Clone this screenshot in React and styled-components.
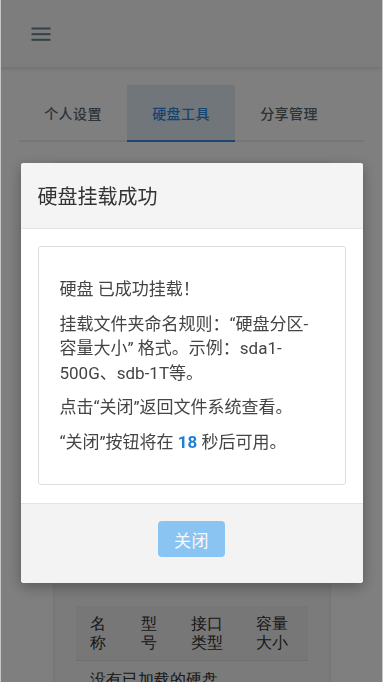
import React from "react";
import styled, { createGlobalStyle } from "styled-components";

const Global = createGlobalStyle`
  html, body { margin: 0; padding: 0; background: #ffffff; }
  body {
    font-family: Roboto, "Noto Sans CJK SC", sans-serif;
    color: #333;
  }
  * { box-sizing: border-box; }
`;

const Page = styled.div`
  height: 682px;
  overflow: hidden;
  background: #ffffff;
  border-left: 1px solid #c6c6c6;
  border-right: 1px solid #c6c6c6;
`;

const Header = styled.header`
  height: 67px;
  background: #fafafa;
  box-shadow: 0 2px 4px rgba(0, 0, 0, 0.12);
  display: flex;
  align-items: center;
  padding-left: 30px;
`;

const MenuButton = styled.button`
  border: 0;
  background: transparent;
  padding: 0;
  display: flex;
  width: 20px;
  height: 14px;
  color: #66808c;
`;

const Tabs = styled.nav`
  margin: 18px 18px 0;
  display: flex;
  border-bottom: 2px solid #ececec;
`;

const Tab = styled.div`
  width: 108px;
  height: 57px;
  margin-bottom: -2px;
  display: flex;
  align-items: center;
  justify-content: center;
  font-size: 14px;
  font-weight: 500;
  letter-spacing: 0.4px;
  color: ${(p) => (p.$active ? "#2a88e0" : "#5e666e")};
  background: ${(p) => (p.$active ? "#e2ecf6" : "transparent")};
  border-bottom: 2px solid ${(p) => (p.$active ? "#3a8ee0" : "transparent")};
`;

const Card = styled.section`
  width: 274px;
  margin: 20px auto 0;
  background: #f6f6f6;
  box-shadow: 0 1px 4px rgba(0, 0, 0, 0.18);
  padding: 444px 21px 0;
`;

const Table = styled.table`
  width: 232px;
  table-layout: fixed;
  border-collapse: collapse;
  font-family: "AR PL UKai CN", "AR PL UKai", "AR PL UMing CN", serif;
  font-size: 16px;
  line-height: 19px;
  color: #2e2e2e;
`;

const Th = styled.th`
  width: ${(p) => p.$w}px;
  background: #eeeeee;
  text-align: left;
  font-weight: normal;
  padding: 8px 14px;
  border-bottom: 1px solid #dcdcdc;
  vertical-align: top;
`;

const Td = styled.td`
  padding: 9px 14px;
  line-height: 20px;
  white-space: nowrap;
`;

const Overlay = styled.div`
  position: fixed;
  top: 0;
  bottom: 0;
  left: 1px;
  right: 1px;
  background: rgba(0, 0, 0, 0.5);
  display: flex;
  justify-content: center;
  align-items: flex-start;
  padding-top: 163px;
`;

const Modal = styled.div`
  width: 342px;
  background: #ffffff;
  border-radius: 3px;
  overflow: hidden;
  box-shadow: 0 4px 14px rgba(0, 0, 0, 0.3);
`;

const ModalHeader = styled.div`
  height: 66px;
  background: #f4f4f4;
  border-bottom: 1px solid #e6e6e6;
  display: flex;
  align-items: center;
  padding: 0 17px;
  font-size: 20px;
  color: #333;
`;

const ModalBody = styled.div`
  padding: 17px 17px 18px;
`;

const Notice = styled.div`
  border: 1px solid #dedede;
  border-radius: 3px;
  padding: 20px 31px 20px 21px;
  font-size: 17px;
  line-height: 24.5px;
  color: #444;
`;

const Para = styled.p`
  margin: 10px 0;
`;

const Count = styled.strong`
  color: #1e7fd8;
  font-weight: bold;
`;

const ModalFooter = styled.div`
  height: 80px;
  background: #f3f3f3;
  border-top: 1px solid #e4e4e4;
  display: flex;
  justify-content: center;
  align-items: flex-start;
  padding-top: 17px;
`;

const CloseButton = styled.button`
  width: 67px;
  height: 36px;
  border: 0;
  border-radius: 4px;
  background: #2196f3;
  opacity: 0.5;
  color: #ffffff;
  font-family: Roboto, "Noto Sans CJK SC", sans-serif;
  font-size: 17px;
  letter-spacing: 0.5px;
  cursor: not-allowed;
`;

function MenuIcon() {
  return (
    <svg width="20" height="14" viewBox="0 0 20 14" fill="currentColor">
      <rect x="0.5" y="0.5" width="19" height="2" />
      <rect x="0.5" y="6.2" width="19" height="2" />
      <rect x="0.5" y="11.8" width="19" height="2" />
    </svg>
  );
}

export default function App() {
  return (
    <>
      <Global />
      <Page>
        <Header>
          <MenuButton aria-label="menu">
            <MenuIcon />
          </MenuButton>
        </Header>
        <Tabs>
          <Tab>个人设置</Tab>
          <Tab $active>硬盘工具</Tab>
          <Tab>分享管理</Tab>
        </Tabs>
        <Card>
          <Table>
            <thead>
              <tr>
                <Th $w={51}>名称</Th>
                <Th $w={50}>型号</Th>
                <Th $w={65}>接口类型</Th>
                <Th $w={66}>容量大小</Th>
              </tr>
            </thead>
            <tbody>
              <tr>
                <Td colSpan={4}>没有已加载的硬盘</Td>
              </tr>
            </tbody>
          </Table>
        </Card>
      </Page>
      <Overlay>
        <Modal>
          <ModalHeader>硬盘挂载成功</ModalHeader>
          <ModalBody>
            <Notice>
              <Para>硬盘 已成功挂载！</Para>
              <Para>挂载文件夹命名规则：“硬盘分区-容量大小” 格式。示例：sda1-500G、sdb-1T等。</Para>
              <Para>点击“关闭”返回文件系统查看。</Para>
              <Para>
                “关闭”按钮将在 <Count>18</Count> 秒后可用。
              </Para>
            </Notice>
          </ModalBody>
          <ModalFooter>
            <CloseButton disabled>关闭</CloseButton>
          </ModalFooter>
        </Modal>
      </Overlay>
    </>
  );
}
